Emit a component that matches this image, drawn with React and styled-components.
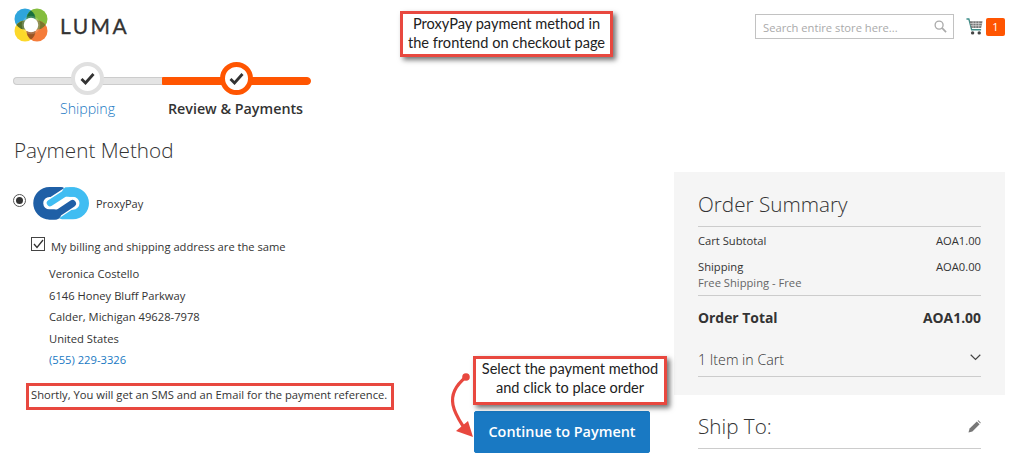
import React from "react";
import styled, { createGlobalStyle } from "styled-components";

const GlobalStyle = createGlobalStyle`
    html, body {
        margin: 0;
        padding: 0;
        background: #fff;
    }
    * {
        box-sizing: border-box;
    }
`;

const Page = styled.div`
    position: relative;
    width: 1013px;
    height: 467px;
    overflow: hidden;
    font-family: "Open Sans", sans-serif;
    color: #333;
`;

const Header = styled.header`
    display: flex;
    align-items: flex-start;
    height: 62px;
    padding: 8px 8px 0 14px;
`;

const Brand = styled.div`
    display: flex;
    align-items: center;
    gap: 12px;
    height: 34px;
`;

const Wordmark = styled.span`
    font-family: "Lato", sans-serif;
    font-size: 21px;
    font-weight: 400;
    letter-spacing: 2.4px;
    color: #333;
    -webkit-text-stroke: 0.3px #333;
`;

const HeaderTools = styled.div`
    display: flex;
    align-items: center;
    margin: 6px 0 0 auto;
`;

const SearchBox = styled.div`
    display: flex;
    align-items: center;
    justify-content: space-between;
    width: 199px;
    height: 25px;
    padding: 0 6px 0 7px;
    border: 1px solid #c2c2c2;
    font-size: 11.2px;
    color: #aaa;
`;

const SearchHint = styled.span`
    margin-top: 2px;
`;

const Cart = styled.div`
    display: flex;
    align-items: center;
    margin-left: 12px;
    gap: 3px;
`;

const Badge = styled.span`
    display: flex;
    align-items: center;
    justify-content: center;
    width: 19px;
    height: 18px;
    border-radius: 2px;
    background: #ff5501;
    color: #fff;
    font-size: 11px;
`;

const Main = styled.main`
    display: grid;
    grid-template-columns: 674px 331px;
`;

const Left = styled.div`
    display: flex;
    flex-direction: column;
`;

const Progress = styled.div`
    display: flex;
    width: 298px;
    margin-left: 13px;
`;

const Step = styled.div`
    position: relative;
    display: flex;
    flex-direction: column;
    align-items: center;
    flex: 1;
`;

const Track = styled.div`
    position: absolute;
    top: 15px;
    left: 0;
    right: 0;
    height: 8px;
    background: ${({ $active }) => ($active ? "#ff5501" : "#e4e4e4")};
    border: 1px solid ${({ $active }) => ($active ? "#ff5501" : "#ccc")};
    border-right-width: ${({ $active }) => ($active ? "1px" : "0")};
    border-radius: ${({ $active }) => ($active ? "0 4px 4px 0" : "4px 0 0 4px")};
`;

const Circle = styled.div`
    position: relative;
    display: flex;
    align-items: center;
    justify-content: center;
    width: 33px;
    height: 33px;
    border-radius: 50%;
    background: #fff;
    border: ${({ $active }) => ($active ? "5px solid #ff5501" : "4px solid #e0e0e0")};
`;

const StepLabel = styled.span`
    margin: 4px ${({ $active }) => ($active ? "2px" : "0")} 0 0;
    font-size: ${({ $active }) => ($active ? "14.3px" : "14.2px")};
    line-height: 20px;
    font-weight: ${({ $active }) => ($active ? 600 : 300)};
    color: ${({ $active }) => ($active ? "#333" : "#1979c3")};
`;

const Title = styled.h2`
    margin: ${({ $top }) => $top || 0} 0 0;
    font-size: 20.7px;
    line-height: 28px;
    font-weight: 300;
    color: #333;
`;

const PaymentSection = styled.section`
    display: flex;
    flex-direction: column;
    padding-left: 14px;
`;

const Method = styled.div`
    display: flex;
    align-items: center;
    margin-top: 23px;
    font-size: 11px;
`;

const Radio = styled.span`
    display: flex;
    align-items: center;
    justify-content: center;
    width: 13px;
    height: 13px;
    margin: -6px 7px 0 -1px;
    border: 1px solid #555;
    border-radius: 50%;
    &::after {
        content: "";
        width: 7px;
        height: 7px;
        border-radius: 50%;
        background: #333;
    }
`;

const BillingRow = styled.label`
    display: flex;
    align-items: center;
    gap: 6px;
    margin: 19px 0 0 17px;
    font-size: 11.17px;
    line-height: 16px;
`;

const CheckBox = styled.span`
    display: flex;
    align-items: center;
    justify-content: center;
    width: 14px;
    height: 14px;
    margin-top: -6px;
    border: 1px solid #444;
    background: #fff;
`;

const Address = styled.address`
    display: flex;
    flex-direction: column;
    margin: 8px 0 0 35px;
    font-style: normal;
    font-size: 11.2px;
    line-height: 21.5px;
    color: #333;
`;

const Phone = styled.span`
    color: #1979c3;
`;

const Notice = styled.div`
    width: 368px;
    height: 27px;
    margin: 12px 0 0 12px;
    padding-left: 2px;
    border: 3px solid #e8483f;
    font-size: 11.2px;
    line-height: 18px;
    color: #333;
`;

const PayButton = styled.button`
    align-self: flex-end;
    width: 176px;
    height: 42px;
    margin: 1px 24px 0 0;
    border: 1px solid #1979c3;
    border-radius: 2px;
    background: #1979c3;
    color: #fff;
    font-family: inherit;
    font-size: 14.4px;
    font-weight: 600;
`;

const Aside = styled.aside`
    display: flex;
    flex-direction: column;
    margin-top: 110px;
`;

const Summary = styled.div`
    height: 223px;
    padding: 18px 24px 0;
    background: #f5f5f5;
`;

const SummaryTitle = styled(Title)`
    padding-bottom: 8px;
    border-bottom: 1px solid #ccc;
`;

const Row = styled.div`
    display: flex;
    justify-content: space-between;
    font-size: 11.2px;
    line-height: 15px;
    margin-top: ${({ $top }) => $top || "0"};
`;

const Muted = styled.div`
    margin-top: 1px;
    padding-bottom: 5px;
    border-bottom: 1px solid #ccc;
    font-size: 11.2px;
    line-height: 15px;
    color: #666;
`;

const TotalRow = styled(Row)`
    font-size: 13.9px;
    line-height: 20px;
    font-weight: 700;
    margin-top: 12px;
`;

const CartRow = styled.div`
    display: flex;
    align-items: center;
    justify-content: space-between;
    height: 31px;
    margin-top: 18px;
    padding-bottom: 3px;
    border-bottom: 1px solid #ccc;
    font-size: 14.2px;
    font-weight: 300;
    color: #333;
`;

const ShipTo = styled.div`
    display: flex;
    align-items: center;
    justify-content: space-between;
    height: 41px;
    margin: 13px 24px 0;
    padding-bottom: 4px;
    border-bottom: 1px solid #ccc;
`;

const Callout = styled.div`
    position: absolute;
    left: ${({ $x }) => $x}px;
    top: ${({ $y }) => $y}px;
    width: ${({ $w }) => $w}px;
    height: ${({ $h }) => $h}px;
    border: 3px solid #e8483f;
    background: #fff;
    box-shadow: 3px 3px 5px rgba(0, 0, 0, 0.55);
    font-family: "Lato", sans-serif;
    font-size: 14.6px;
    line-height: 19.3px;
    text-align: center;
    color: #222;
`;

const ArrowArt = styled.svg`
    position: absolute;
    left: 448px;
    top: 365px;
`;

const LumaLogo = () => (
    <svg width="34" height="34" viewBox="0 0 34 34">
        <circle cx="11" cy="11" r="10.5" fill="#2fa5dc" />
        <circle cx="23" cy="11" r="10.5" fill="#84bd3e" />
        <circle cx="11" cy="23" r="10.5" fill="#fcd82a" />
        <circle cx="23" cy="23" r="10.5" fill="#f57c3a" />
        <path d="M17 2.4A10.5 10.5 0 0 1 17 19.6A10.5 10.5 0 0 1 17 2.4Z" fill="#17703f" />
        <path d="M17 14.4A10.5 10.5 0 0 1 17 31.6A10.5 10.5 0 0 1 17 14.4Z" fill="#9a5524" />
        <path d="M2.4 17A10.5 10.5 0 0 1 19.6 17A10.5 10.5 0 0 1 2.4 17Z" fill="#4f6b2a" />
        <path d="M14.4 17A10.5 10.5 0 0 1 31.6 17A10.5 10.5 0 0 1 14.4 17Z" fill="#79772e" />
        <circle cx="17" cy="17" r="8.3" fill="none" stroke="#fff" strokeOpacity="0.18" strokeWidth="2" />
        <circle cx="17" cy="17" r="7.3" fill="#fff" />
    </svg>
);

const ProxyLogo = () => (
    <svg width="57" height="33" viewBox="0 0 57 33" style={{ marginRight: 6 }}>
        <path d="M28 5H16.5A11 11 0 0 0 16.5 27.5H23" fill="none" stroke="#1f5fa6" strokeWidth="10" strokeLinecap="round" />
        <path d="M29 27.5H40A11 11 0 0 0 40 5H34" fill="none" stroke="#40bdf2" strokeWidth="9.5" strokeLinecap="round" />
        <path d="M34 5L17 16" stroke="#fff" strokeWidth="9.5" strokeLinecap="round" />
        <path d="M34 5L17 16" stroke="#40bdf2" strokeWidth="6.5" strokeLinecap="round" />
        <path d="M23 27.5L39.5 16.5" stroke="#fff" strokeWidth="9.5" strokeLinecap="round" />
        <path d="M23 27.5L39.5 16.5" stroke="#1f5fa6" strokeWidth="7" strokeLinecap="round" />
        <path d="M16.5 27.5H23" stroke="#1f5fa6" strokeWidth="10" strokeLinecap="round" />
        <path d="M34 5H40" stroke="#40bdf2" strokeWidth="9.5" strokeLinecap="round" />
    </svg>
);

const CheckMark = () => (
    <svg width="15" height="13" viewBox="0 0 15 13">
        <path d="M1.5 7L5.5 11L13.5 2" fill="none" stroke="#333" strokeWidth="2.8" />
    </svg>
);

const SearchIcon = () => (
    <svg width="13" height="13" viewBox="0 0 14 14">
        <circle cx="5.5" cy="5.5" r="4.3" fill="none" stroke="#aaa" strokeWidth="1.4" />
        <path d="M8.8 8.8L13 13" stroke="#aaa" strokeWidth="1.8" />
    </svg>
);

const CartIcon = () => (
    <svg width="17" height="17" viewBox="0 0 18 18">
        <path d="M0.5 1H3L6 12.5H16" fill="none" stroke="#3f8f8a" strokeWidth="1.5" />
        <path d="M3.8 3.5H17.5L16 10.5H5.5Z" fill="#777" />
        <path d="M4.5 5.8H17M5 8.1H16.5M7.5 3.5V10.5M10.5 3.5V10.5M13.5 3.5V10.5" stroke="#ddd" strokeWidth="0.7" />
        <circle cx="7" cy="15.8" r="1.8" fill="#444" />
        <circle cx="14" cy="15.8" r="1.8" fill="#444" />
    </svg>
);

const Chevron = () => (
    <svg width="11" height="7" viewBox="0 0 11 7" style={{ marginTop: -4 }}>
        <path d="M0.7 0.8L5.5 5.5L10.3 0.8" fill="none" stroke="#444" strokeWidth="1.2" />
    </svg>
);

const Pencil = () => (
    <svg width="13" height="13" viewBox="0 0 13 13">
        <path d="M0.5 12.5L1.6 8.6L8.8 1.4L11.6 4.2L4.4 11.4Z" fill="#777" />
        <path d="M9.6 0.7L10.4 0.3L12.7 2.6L12.3 3.4Z" fill="#777" />
    </svg>
);

const Arrow = () => (
    <ArrowArt width="40" height="80" viewBox="0 0 40 80">
        <circle cx="18" cy="12" r="3.8" fill="#e8483f" />
        <path d="M18 12C8 20 3 30 5 40C7 50 12 56 18 66" fill="none" stroke="#e8483f" strokeWidth="3.2" />
        <path d="M8 66L20 56L25 72Z" fill="#e8483f" />
    </ArrowArt>
);

const App = () => {
    return (
        <Page>
            <GlobalStyle />
            <Header>
                <Brand>
                    <LumaLogo />
                    <Wordmark>LUMA</Wordmark>
                </Brand>
                <HeaderTools>
                    <SearchBox>
                        <SearchHint>Search entire store here...</SearchHint>
                        <SearchIcon />
                    </SearchBox>
                    <Cart>
                        <CartIcon />
                        <Badge>1</Badge>
                    </Cart>
                </HeaderTools>
            </Header>
            <Main>
                <Left>
                    <Progress>
                        <Step>
                            <Track />
                            <Circle>
                                <CheckMark />
                            </Circle>
                            <StepLabel>Shipping</StepLabel>
                        </Step>
                        <Step>
                            <Track $active />
                            <Circle $active>
                                <CheckMark />
                            </Circle>
                            <StepLabel $active>Review &amp; Payments</StepLabel>
                        </Step>
                    </Progress>
                    <PaymentSection>
                        <Title $top="17px">Payment Method</Title>
                        <Method>
                            <Radio />
                            <ProxyLogo />
                            <span>ProxyPay</span>
                        </Method>
                        <BillingRow>
                            <CheckBox>
                                <svg width="11" height="10" viewBox="0 0 11 10">
                                    <path d="M1 5L4 8.5L10 1" fill="none" stroke="#333" strokeWidth="1.3" />
                                </svg>
                            </CheckBox>
                            My billing and shipping address are the same
                        </BillingRow>
                        <Address>
                            <span>Veronica Costello</span>
                            <span>6146 Honey Bluff Parkway</span>
                            <span>Calder, Michigan 49628-7978</span>
                            <span>United States</span>
                            <Phone>(555) 229-3326</Phone>
                        </Address>
                        <Notice>Shortly, You will get an SMS and an Email for the payment reference.</Notice>
                        <PayButton>Continue to Payment</PayButton>
                    </PaymentSection>
                </Left>
                <Aside>
                    <Summary>
                        <SummaryTitle>Order Summary</SummaryTitle>
                        <Row $top="6px">
                            <span>Cart Subtotal</span>
                            <span>AOA1.00</span>
                        </Row>
                        <Row $top="11px">
                            <span>Shipping</span>
                            <span>AOA0.00</span>
                        </Row>
                        <Muted>Free Shipping - Free</Muted>
                        <TotalRow>
                            <span>Order Total</span>
                            <span>AOA1.00</span>
                        </TotalRow>
                        <CartRow>
                            <span>1 Item in Cart</span>
                            <Chevron />
                        </CartRow>
                    </Summary>
                    <ShipTo>
                        <Title>Ship To:</Title>
                        <Pencil />
                    </ShipTo>
                </Aside>
            </Main>
            <Callout $x={400} $y={11} $w={213} $h={46}>
                ProxyPay payment method in
                <br />
                the frontend on checkout page
            </Callout>
            <Callout $x={473} $y={356} $w={194} $h={49}>
                Select the payment method
                <br />
                and click to place order
            </Callout>
            <Arrow />
        </Page>
    );
};

export default App;
